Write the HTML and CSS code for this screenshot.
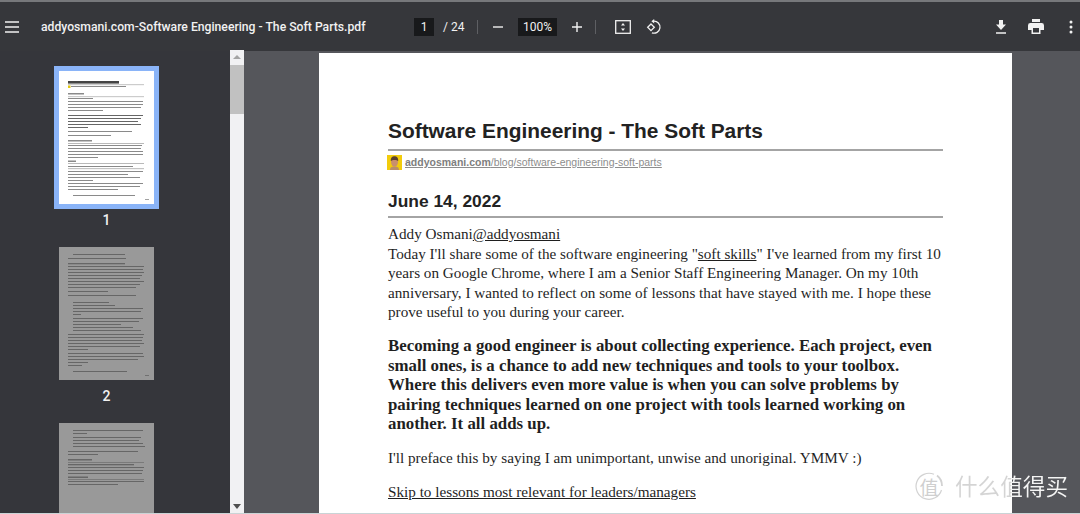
FILE: index.html
```html
<!DOCTYPE html>
<html lang="en">
<head>
  <meta charset="UTF-8" />
  <title>addyosmani.com-Software Engineering - The Soft Parts.pdf</title>
  <link rel="stylesheet" href="styles.css">
</head>
<body>
  <div class="viewer">
    <header class="toolbar">
      <button class="icon-btn menu-btn" aria-label="Menu">
        <svg width="14" height="12" viewBox="0 0 14 12"><path d="M0 1h14M0 6h14M0 11h14" stroke="#f1f1f1" stroke-width="1.7" fill="none"/></svg>
      </button>
      <div class="doc-title">addyosmani.com-Software Engineering - The Soft Parts.pdf</div>
      <div class="page-box">1</div>
      <div class="page-total">/ 24</div>
      <div class="divider first"></div>
      <button class="icon-btn minus-btn" aria-label="Zoom out">
        <svg width="12" height="12" viewBox="0 0 12 12"><path d="M1 6h10" stroke="#f1f1f1" stroke-width="1.4"/></svg>
      </button>
      <div class="zoom-box">100%</div>
      <button class="icon-btn plus-btn" aria-label="Zoom in">
        <svg width="12" height="12" viewBox="0 0 12 12"><path d="M1 6h10M6 1v10" stroke="#f1f1f1" stroke-width="1.4"/></svg>
      </button>
      <div class="divider second"></div>
      <button class="icon-btn fit-btn" aria-label="Fit to page">
        <svg width="16" height="14" viewBox="0 0 16 14"><rect x="0.7" y="0.7" width="14.6" height="12.6" fill="none" stroke="#f1f1f1" stroke-width="1.3"/><path d="M8 3l2 2.400H6zM8 11L6 8.600h4z" fill="#f1f1f1"/></svg>
      </button>
      <button class="icon-btn rotate-btn" aria-label="Rotate">
        <svg width="16" height="16" viewBox="0 0 16 16"><path d="M7.500 2.200a6 6 0 1 1-1.600 11.600" fill="none" stroke="#f1f1f1" stroke-width="1.300"/><path d="M8.200 0v4.400L5.400 2.200z" fill="#f1f1f1"/><path d="M5 5l3.300 3.300L5 11.600 1.700 8.300z" fill="none" stroke="#f1f1f1" stroke-width="1.300"/></svg>
      </button>
      <div class="toolbar-end">
        <button class="icon-btn" aria-label="Download">
          <svg width="12" height="14" viewBox="0 0 12 14"><path d="M4 0h4v4.500h3L6 10 1 4.500h3zM1 12.300h10v1.400H1z" fill="#f1f1f1"/></svg>
        </button>
        <button class="icon-btn" aria-label="Print">
          <svg width="16" height="15" viewBox="0 0 16 15"><path d="M4 0h8v3H4zM2.400 4h11.200A2.400 2.400 0 0 1 16 6.400V11h-3.500v4h-9v-4H0V6.400A2.400 2.400 0 0 1 2.400 4zM5 9v4.500h6V9z" fill="#f1f1f1" fill-rule="evenodd"/></svg>
        </button>
        <button class="icon-btn more-btn" aria-label="More">
          <svg width="4" height="14" viewBox="0 0 4 14"><circle cx="2" cy="2" r="1.500" fill="#f1f1f1"/><circle cx="2" cy="7" r="1.500" fill="#f1f1f1"/><circle cx="2" cy="12" r="1.500" fill="#f1f1f1"/></svg>
        </button>
      </div>
    </header>

    <div class="content">
      <aside class="sidebar">
        <div class="thumb-list">
          <div class="thumb active">
            <div class="thumb-frame">
              <svg class="thumb-page" viewBox="0 0 95 133">
                <rect x="9" y="10" width="51" height="2.600" fill="#444"/>
                <g fill="#999"><rect x="9" y="13.500" width="76" height="0.600"/><rect x="9" y="25.500" width="76" height="0.600"/></g>
                <rect x="9" y="14.500" width="2.500" height="2.500" fill="#e3c810"/>
                <g fill="#8a8a8a">
                  <rect x="12" y="15" width="55" height="1"/>
                  <rect x="9" y="22" width="16" height="1.500"/><rect x="9" y="27" width="25" height="1"/>
                  <rect x="9" y="30" width="75" height="1"/><rect x="9" y="33" width="75" height="1"/><rect x="9" y="36" width="73" height="1"/><rect x="9" y="39" width="35" height="1"/>
                </g>
                <g fill="#666">
                  <rect x="9" y="44" width="75" height="1"/><rect x="9" y="47" width="73" height="1"/><rect x="9" y="50" width="70" height="1"/><rect x="9" y="53" width="73" height="1"/><rect x="9" y="56" width="20" height="1"/>
                </g>
                <g fill="#8a8a8a">
                  <rect x="9" y="60" width="64" height="1"/><rect x="9" y="64" width="43" height="1"/>
                  <rect x="9" y="69" width="24" height="1.500"/><rect x="9" y="72" width="76" height="0.600"/>
                  <rect x="9" y="74" width="74" height="1"/><rect x="9" y="77" width="73" height="1"/><rect x="9" y="80" width="75" height="1"/><rect x="9" y="83" width="75" height="1"/><rect x="9" y="86" width="30" height="1"/>
                  <rect x="9" y="89.500" width="8" height="1.500"/><rect x="9" y="92" width="76" height="0.600"/>
                  <rect x="9" y="95" width="65" height="1"/><rect x="9" y="97.500" width="76" height="0.600"/>
                  <rect x="9" y="100" width="75" height="1"/><rect x="9" y="103" width="60" height="1"/><rect x="9" y="106" width="72" height="1"/><rect x="9" y="109" width="25" height="1"/>
                  <rect x="9" y="112" width="75" height="1"/><rect x="9" y="115" width="72" height="1"/><rect x="9" y="118" width="50" height="1"/>
                  <rect x="14" y="124" width="62" height="1"/><rect x="86" y="128" width="4" height="0.800"/>
                </g>
              </svg>
            </div>
            <div class="thumb-num">1</div>
          </div>
          <div class="thumb dim">
            <div class="thumb-frame">
              <svg class="thumb-page" viewBox="0 0 95 133">
                <g fill="#aaa">
                  <rect x="14" y="7" width="52" height="1"/><rect x="9" y="11" width="58" height="1"/>
                  <rect x="9" y="16" width="57" height="1.300"/><rect x="9" y="19" width="76" height="1"/><rect x="9" y="22" width="75" height="1"/><rect x="9" y="25" width="76" height="1"/><rect x="9" y="28" width="74" height="1"/><rect x="9" y="31" width="72" height="1"/>
                  <rect x="9" y="34" width="76" height="1"/><rect x="9" y="37" width="72" height="1"/><rect x="9" y="40" width="68" height="1"/>
                  <rect x="9" y="44" width="40" height="1"/><rect x="9" y="48" width="68" height="1"/>
                  <rect x="14" y="55" width="36" height="1"/><rect x="14" y="58" width="42" height="1"/><rect x="14" y="61" width="70" height="1"/><rect x="14" y="64" width="68" height="1"/><rect x="14" y="67" width="8" height="1"/>
                  <rect x="14" y="71" width="70" height="1"/><rect x="14" y="74" width="66" height="1"/><rect x="14" y="77" width="48" height="1"/><rect x="14" y="80" width="60" height="1"/><rect x="14" y="83" width="68" height="1"/>
                  <rect x="9" y="87" width="76" height="1"/><rect x="9" y="90" width="75" height="1"/><rect x="9" y="93" width="74" height="1"/><rect x="9" y="96" width="76" height="1"/><rect x="9" y="99" width="72" height="1"/><rect x="9" y="102" width="20" height="1"/>
                  <rect x="9" y="106" width="75" height="1"/><rect x="9" y="109" width="76" height="1"/><rect x="9" y="112" width="70" height="1"/><rect x="9" y="115" width="20" height="1"/>
                  <rect x="9" y="118" width="14" height="1"/><rect x="14" y="124" width="54" height="1"/><rect x="86" y="128" width="4" height="0.800"/>
                </g>
              </svg>
            </div>
            <div class="thumb-num">2</div>
          </div>
          <div class="thumb dim">
            <div class="thumb-frame">
              <svg class="thumb-page" viewBox="0 0 95 133">
                <g fill="#aaa">
                  <rect x="14" y="7" width="70" height="1"/><rect x="14" y="10" width="14" height="1"/><rect x="14" y="14" width="68" height="1"/><rect x="14" y="17" width="66" height="1"/>
                  <rect x="14" y="20" width="70" height="1"/><rect x="14" y="23" width="72" height="1"/><rect x="9" y="28" width="70" height="1"/><rect x="9" y="31" width="30" height="1"/>
                  <rect x="9" y="36" width="24" height="1.500"/><rect x="9" y="39" width="76" height="0.600"/><rect x="9" y="41" width="66" height="1.300"/><rect x="9" y="44" width="76" height="1"/><rect x="9" y="47" width="75" height="1"/><rect x="9" y="50" width="74" height="1"/>
                  <rect x="9" y="53.500" width="20" height="1.500"/><rect x="9" y="56" width="76" height="0.600"/><rect x="9" y="58" width="76" height="1"/><rect x="9" y="61" width="50" height="1"/>
                </g>
              </svg>
            </div>
          </div>
        </div>
      </aside>

      <div class="thumb-scrollbar">
        <span class="arrow up"></span>
        <span class="scroll-handle"></span>
        <span class="arrow down"></span>
      </div>

      <main class="main-area">
        <article class="pdf-page">
          <h1>Software Engineering - The Soft Parts</h1>
          <div class="source">
            <svg class="avatar" width="15" height="15" viewBox="0 0 15 15"><rect width="15" height="15" fill="#f2cc0c"/><path d="M3 15c0-3 2-3.500 4.500-3.500S12 12 12 15z" fill="#b98f6a"/><ellipse cx="7.500" cy="7" rx="3.500" ry="4.700" fill="#c98f6c"/><path d="M3.800 6C3.500 2.500 5.500 1.300 7.500 1.300S11.500 2.500 11.200 6C10 4.500 5 4.500 3.800 6z" fill="#5a4030"/></svg>
            <a class="source-link"><strong>addyosmani.com</strong>/blog/software-engineering-soft-parts</a>
          </div>
          <h2>June 14, 2022</h2>
          <p class="lead">Addy Osmani<a>@addyosmani</a><br>Today I'll share some of the software engineering "<a>soft skills</a>" I've learned from my first 10 years on Google Chrome, where I am a Senior Staff Engineering Manager. On my 10th anniversary, I wanted to reflect on some of lessons that have stayed with me. I hope these prove useful to you during your career.</p>
          <p class="bold">Becoming a good engineer is about collecting experience. Each project, even small ones, is a chance to add new techniques and tools to your toolbox. Where this delivers even more value is when you can solve problems by pairing techniques learned on one project with tools learned working on another. It all adds up.</p>
          <p>I'll preface this by saying I am unimportant, unwise and unoriginal. YMMV :)</p>
          <p><a>Skip to lessons most relevant for leaders/managers</a></p>
        </article>
      </main>
    </div>
    <div class="watermark">
      <svg class="wm-logo" width="28" height="28" viewBox="0 0 28 28"><path d="M19 2.300A13 13 0 1 0 26.500 18" fill="none" stroke="#d2d2d2" stroke-width="1.200"/><path d="M22 3.500A13 13 0 0 1 27 14" fill="none" stroke="#d2d2d2" stroke-width="1.800"/></svg>
      <span class="wm-char">值</span>
      <span class="wm-text">什么值得买</span>
    </div>
  </div>
</body>
</html>
```

FILE: styles.css
```css
* {
  box-sizing: border-box;
}

html, body {
  margin: 0;
  height: 100%;
  overflow: hidden;
}

body {
  font-family: "Liberation Serif", serif;
  background-color: #56575c;
}

.viewer {
  position: relative;
  display: flex;
  flex-direction: column;
  width: 1080px;
  height: 514px;
  border-bottom: 1px solid #c9d4d6;
}

button {
  border: none;
  background: none;
  padding: 0;
  cursor: pointer;
}

.icon-btn {
  display: flex;
  align-items: center;
  justify-content: center;
}

/* toolbar */
.toolbar {
  display: flex;
  align-items: center;
  height: 51px;
  flex-shrink: 0;
  padding-left: 5px;
  background-color: #36373b;
  border-top: 2px solid #77787b;
  color: #f1f1f1;
  font-family: Roboto, sans-serif;
  font-size: 12px;
}

.menu-btn {
  width: 14px;
  margin-right: 22px;
}

.doc-title {
  width: 373px;
  font-weight: 500;
  font-size: 12.2px;
  white-space: nowrap;
}

.page-box, .zoom-box {
  display: flex;
  align-items: center;
  justify-content: center;
  height: 18px;
  background-color: #18191b;
}

.page-box {
  width: 20px;
}

.page-total {
  margin-left: 9px;
  width: 20px;
  white-space: nowrap;
}

.divider {
  width: 1px;
  height: 14px;
  background-color: #5e5f63;
}

.divider.first {
  margin-left: 14px;
}

.minus-btn {
  margin-left: 14px;
  width: 12px;
}

.zoom-box {
  margin-left: 14px;
  width: 39px;
}

.plus-btn {
  margin-left: 14px;
  width: 12px;
}

.divider.second {
  margin-left: 12px;
}

.fit-btn {
  margin-left: 19px;
  width: 16px;
}

.rotate-btn {
  margin-left: 15px;
  width: 16px;
}

.toolbar-end {
  display: flex;
  align-items: center;
  gap: 21px;
  margin-left: auto;
  margin-right: 7px;
}

.more-btn {
  margin-left: 4px;
}

/* main layout */
.content {
  display: flex;
  flex: 1;
  min-height: 0;
}

.sidebar {
  width: 230px;
  flex-shrink: 0;
  background-color: #35363b;
  overflow: hidden;
}

.thumb-list {
  display: flex;
  flex-direction: column;
  align-items: center;
  padding: 15px 17px 0 0;
}

.thumb {
  display: flex;
  flex-direction: column;
  align-items: center;
  margin-bottom: 12px;
}

.thumb-frame {
  width: 105px;
  height: 143px;
  padding: 5px;
}

.thumb.active .thumb-frame {
  background-color: #8ab4f8;
}

.thumb-page {
  display: block;
  width: 95px;
  height: 133px;
  background-color: #fff;
}

.thumb.dim .thumb-page {
  filter: brightness(0.6);
}

.thumb-num {
  margin-top: 1px;
  height: 20px;
  font-family: Roboto, sans-serif;
  font-size: 14px;
  font-weight: 500;
  line-height: 20px;
  color: #f1f1f1;
}

.thumb-scrollbar {
  display: flex;
  flex-direction: column;
  align-items: center;
  width: 14px;
  flex-shrink: 0;
  margin-top: -1px;
  background-color: #f1f1f3;
}

.scroll-handle {
  width: 14px;
  height: 49px;
  background-color: #c1c1c1;
}

.arrow {
  display: block;
  width: 0;
  height: 0;
  border-left: 4px solid transparent;
  border-right: 4px solid transparent;
}

.arrow.up {
  margin: 5px 0 6px;
  border-bottom: 4px solid #a4a4a4;
}

.arrow.down {
  margin: auto 0 4px;
  border-top: 5px solid #505050;
}

.main-area {
  display: flex;
  flex: 1;
  min-width: 0;
  padding: 2px 0 0 75px;
  background-color: #55565b;
  overflow: hidden;
}

/* the page itself */
.pdf-page {
  width: 693px;
  height: 470px;
  padding: 65px 69px 0;
  background-color: #fff;
  color: #1f1f1f;
  font-size: 15.2px;
  line-height: 19.6px;
  overflow: hidden;
}

h1, h2 {
  margin: 0;
  font-family: "Liberation Sans", sans-serif;
  font-weight: 700;
  color: #222;
  border-bottom: 2px solid #a4a4a4;
}

h1 {
  font-size: 20.9px;
  line-height: 26px;
  padding-bottom: 5px;
}

.source {
  display: flex;
  align-items: center;
  gap: 3px;
  height: 17px;
  margin-top: 3px;
  font-family: "Liberation Sans", sans-serif;
  font-size: 10.5px;
  color: #8d8d8d;
}

.avatar {
  flex-shrink: 0;
  margin-left: -1px;
}

.source-link {
  text-decoration: underline;
}

.source-link strong {
  font-weight: 700;
  color: #7e7e7e;
}

h2 {
  margin-top: 20px;
  font-size: 17.4px;
  line-height: 20px;
  padding-bottom: 5px;
}

p {
  margin: 0 0 14px;
}

p a {
  text-decoration: underline;
}

.lead {
  margin-top: 6px;
}

.bold {
  font-size: 16.85px;
  font-weight: 700;
}

/* site watermark sits on top of everything */
.watermark {
  position: absolute;
  right: 12px;
  bottom: 10px;
  display: flex;
  align-items: center;
  height: 34px;
  font-family: "Noto Sans CJK SC", sans-serif;
}

.wm-logo {
  position: absolute;
  left: 0;
  top: 3px;
}

.wm-char {
  width: 28px;
  margin-right: 12px;
  font-size: 19px;
  color: #cfcfcf;
  text-align: center;
}

.wm-text {
  font-size: 22.6px;
  line-height: 34px;
  background: linear-gradient(90deg, #d4d4d4 0, #d4d4d4 50%, #f4f4f4 50%);
  -webkit-background-clip: text;
  background-clip: text;
  color: transparent;
}
```
